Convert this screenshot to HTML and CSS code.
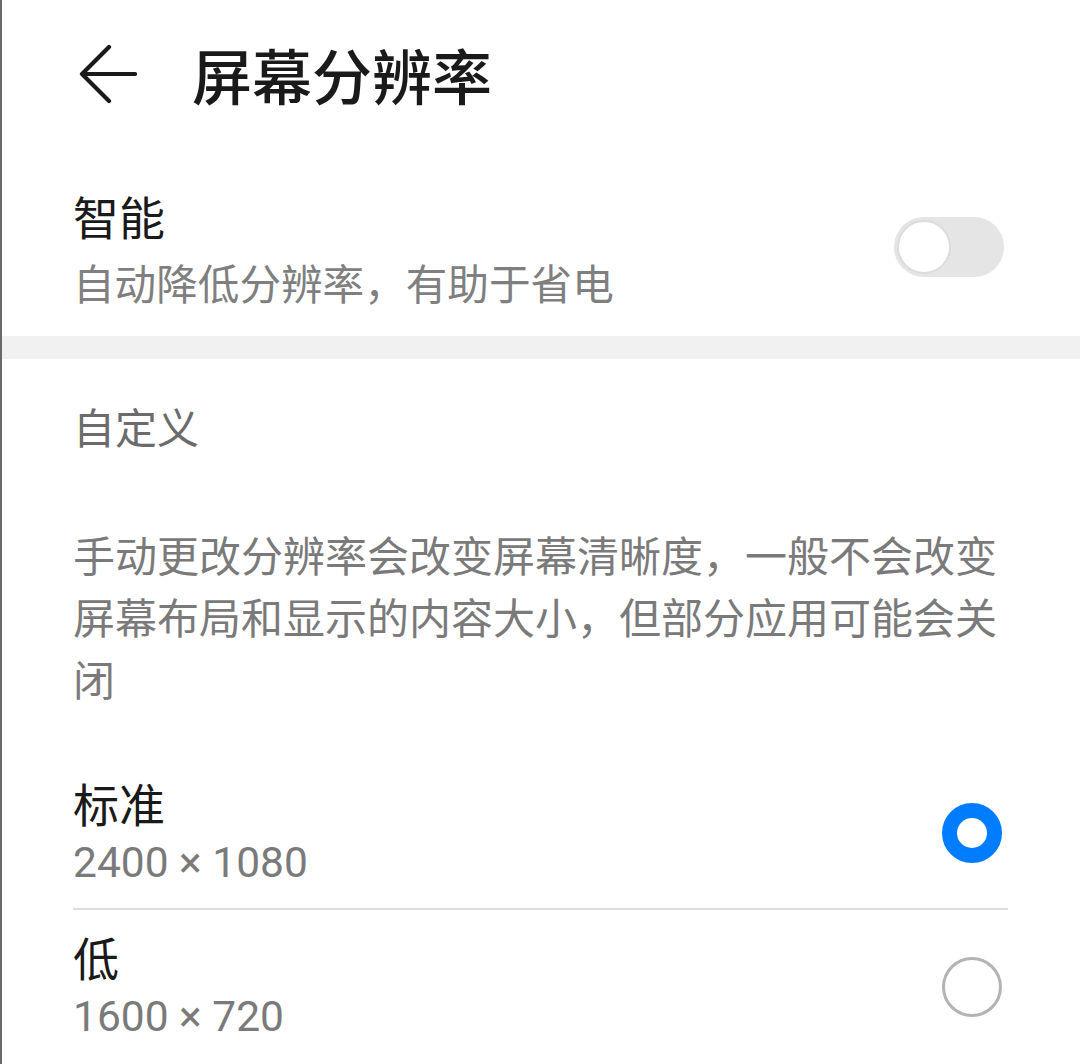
FILE: index.html
```html
<!DOCTYPE html>
<html lang="zh-CN">
<head>
<meta charset="utf-8">
<title>屏幕分辨率</title>
<link rel="stylesheet" href="styles.css">
</head>
<body>
<div class="screen">
  <header class="header">
    <svg class="back" width="58" height="60" viewBox="0 0 58 60" aria-hidden="true">
      <path d="M56 30 H3 M30 3 L3 30 L30 57" fill="none" stroke="#1a1a1a" stroke-width="4.2" stroke-linecap="round" stroke-linejoin="round"/>
    </svg>
    <h1 class="title">屏幕分辨率</h1>
  </header>

  <section class="smart-row">
    <div class="text">
      <div class="item-title">智能</div>
      <div class="item-sub">自动降低分辨率，有助于省电</div>
    </div>
    <div class="switch"><div class="knob"></div></div>
  </section>

  <div class="band"></div>

  <div class="section-label">自定义</div>

  <p class="desc">手动更改分辨率会改变屏幕清晰度，一般不会改变屏幕布局和显示的内容大小，但部分应用可能会关闭</p>

  <div class="options">
    <div class="option option-first">
      <div class="text">
        <div class="item-title">标准</div>
        <div class="item-num">2400 × 1080</div>
      </div>
      <div class="radio checked"></div>
    </div>
    <div class="option option-last">
      <div class="text">
        <div class="item-title">低</div>
        <div class="item-num">1600 × 720</div>
      </div>
      <div class="radio"></div>
    </div>
  </div>
</div>
</body>
</html>
```

FILE: styles.css
```css
* { box-sizing: border-box; }

html, body {
  margin: 0;
  padding: 0;
  background: #ffffff;
}

body {
  font-family: "Noto Sans CJK SC", "Noto Sans", Roboto, sans-serif;
  color: #1a1a1a;
}

.screen {
  width: 1080px;
  height: 1064px;
  border-left: 2px solid #6a6a6a;
  overflow: hidden;
}

.header {
  height: 154px;
  display: flex;
  align-items: center;
  padding-left: 77px;
  padding-bottom: 6px;
}

.back {
  display: block;
  flex: none;
}

.title {
  margin: 0 0 0 55px;
  font-size: 60px;
  font-weight: 500;
  line-height: 80px;
  color: #1a1a1a;
}

.smart-row {
  display: flex;
  align-items: center;
  justify-content: space-between;
  padding: 31px 76px 24px 71px;
}

.item-title {
  font-size: 46px;
  line-height: 60px;
  color: #1a1a1a;
}

.item-sub {
  margin-top: 7px;
  font-size: 41.6px;
  line-height: 60px;
  color: #7f7f7f;
}

.switch {
  width: 110px;
  height: 60px;
  border-radius: 30px;
  background: #e5e5e5;
  padding: 3px;
  margin-top: -4px;
}

.knob {
  width: 54px;
  height: 54px;
  border-radius: 50%;
  background: #ffffff;
  border: 2px solid #dcdcdc;
}

.band {
  height: 23px;
  background: #f1f1f1;
}

.section-label {
  margin-top: 37px;
  padding-left: 71px;
  font-size: 42px;
  line-height: 60px;
  color: #6b6b6b;
}

.desc {
  margin: 67px 0 0 0;
  padding: 0 70px 0 71px;
  font-size: 42px;
  line-height: 62px;
  color: #7a7a7a;
}

.options {
  margin: 65px 72px 0 71px;
}

.option {
  display: flex;
  align-items: center;
  justify-content: space-between;
}

.option-first {
  padding-bottom: 17px;
  border-bottom: 2px solid #dcdcdc;
}

.option-last {
  padding-top: 18px;
}

.item-num {
  margin-top: 5px;
  font-family: Roboto, "Noto Sans", sans-serif;
  font-size: 42.5px;
  line-height: 56px;
  color: #7a7a7a;
}

.option .item-title {
  line-height: 56px;
}

.radio {
  width: 60px;
  height: 60px;
  border-radius: 50%;
  border: 3px solid #b3b3b3;
  margin-right: 6px;
}

.radio.checked {
  border: 15px solid #007dff;
}
```
